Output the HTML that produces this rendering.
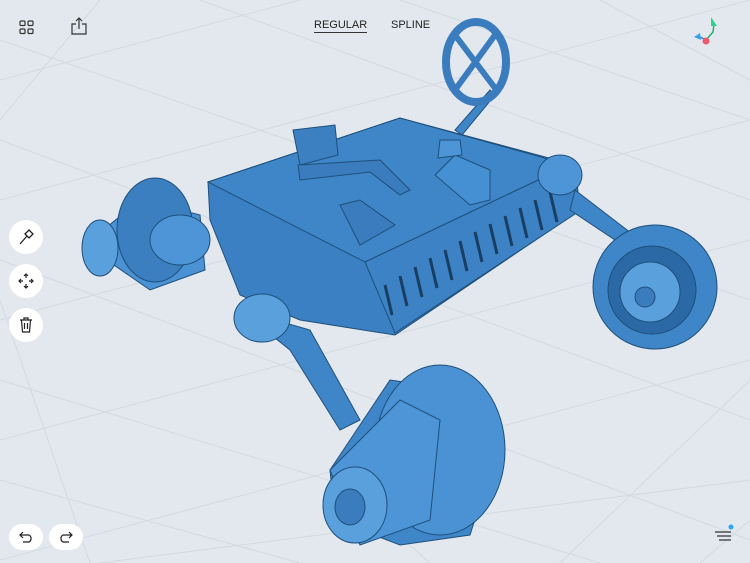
<!DOCTYPE html>
<html><head><style>
html,body{margin:0;padding:0;width:750px;height:563px;overflow:hidden;background:#e3e8ee;font-family:"Liberation Sans",sans-serif}
.btn{position:absolute;width:34px;height:34px;border-radius:50%;background:#fff;display:flex;align-items:center;justify-content:center}
.pill{position:absolute;width:34px;height:26px;border-radius:13px;background:#fff;display:flex;align-items:center;justify-content:center}
.t{position:absolute;font-size:11px;color:#222;top:19px}
</style></head><body>
<svg width="750" height="563" style="position:absolute;left:0;top:0">
<g stroke="#d2d9e0" stroke-width="1" fill="none">
<path d="M0 80 L750 -120 M0 200 L750 0 M0 320 L750 120 M0 440 L750 240 M0 560 L750 360 M100 563 L750 480 M0 40 L750 300 M0 140 L750 420 M0 260 L750 540 M0 380 L600 563 M0 480 L300 563 M200 0 L750 200 M400 0 L750 120"/>
<path d="M370 510 L430 563 M0 300 L90 563 M560 563 L750 380 M100 0 L0 120 M600 0 L750 80 M700 563 L750 520"/>
</g>
<g stroke="#1f4f7a" stroke-width="1">
<path d="M208 182 L400 118 L575 165 L580 210 L395 335 L300 320 L240 295 L210 220 Z" fill="#3a80c2"/>
<path d="M208 182 L400 118 L570 165 L365 262 Z" fill="#3f86c8"/>
<path d="M365 262 L570 165 L578 212 L395 333 Z" fill="#3c82c4"/>
<g stroke="#1a3e63" stroke-width="3">
<path d="M385 285 L392 315 M400 276 L407 306 M415 267 L422 297 M430 258 L437 288 M445 250 L452 280 M460 241 L467 271 M475 232 L482 262 M490 224 L497 254 M505 216 L512 246 M520 208 L527 238 M535 200 L542 230 M550 192 L557 222"/>
</g>
<path d="M293 130 L335 125 L338 155 L300 165 Z" fill="#3c80c2"/>
<path d="M340 205 L360 200 L395 225 L360 245 Z" fill="#3a7cbd"/>
<path d="M435 175 L455 155 L490 170 L490 200 L470 205 Z" fill="#4590d2"/>
<path d="M298 165 L380 160 L410 190 L400 195 L370 172 L300 180 Z" fill="#3a7cbd"/>
<path d="M85 245 L140 200 L200 215 L205 270 L150 290 Z" fill="#4a92d4"/>
<ellipse cx="155" cy="230" rx="38" ry="52" fill="#3b7fc0"/>
<ellipse cx="100" cy="248" rx="18" ry="28" fill="#5aa0dd"/>
<ellipse cx="180" cy="240" rx="30" ry="25" fill="#4d95d6"/>
<path d="M240 310 L310 330 L360 420 L340 430 L290 350 Z" fill="#3f86c9"/>
<ellipse cx="262" cy="318" rx="28" ry="24" fill="#5aa0dd"/>
<path d="M575 190 L640 240 L630 250 L570 210 Z" fill="#3f86c9"/>
<ellipse cx="560" cy="175" rx="22" ry="20" fill="#4d95d6"/>
<circle cx="655" cy="287" r="62" fill="#3f86c9"/>
<circle cx="652" cy="290" r="44" fill="#2a68a6"/>
<circle cx="650" cy="292" r="30" fill="#5aa0dd"/>
<circle cx="645" cy="297" r="10" fill="#3a7cbd"/>
<path d="M330 470 L390 380 L460 390 L500 440 L470 535 L400 545 L335 520 Z" fill="#3f86c9"/>
<ellipse cx="440" cy="450" rx="65" ry="85" fill="#4a92d4"/>
<path d="M330 470 L400 400 L440 420 L430 520 L360 545 Z" fill="#4d95d6"/>
<ellipse cx="355" cy="505" rx="32" ry="38" fill="#5aa0dd"/>
<ellipse cx="350" cy="507" rx="15" ry="18" fill="#3a7cbd"/>
<path d="M455 130 L490 90 L495 95 L462 135 Z" fill="#3f86c9"/>
<ellipse cx="476" cy="62" rx="30" ry="40" fill="none" stroke="#3a7cbd" stroke-width="8"/>
<path d="M455 35 L498 92 M495 35 L455 90" stroke="#3a7cbd" stroke-width="6"/>
<path d="M440 140 L460 140 L462 155 L438 158 Z" fill="#4d95d6"/>
</g>
<path d="M706 40 L713 32 L714 24" stroke="#2ab06a" stroke-width="1.5" fill="none"/>
<path d="M711 17 L717 26 L711 26 Z" fill="#2fd28a"/>
<path d="M706 40 L698 36" stroke="#2a7fd0" stroke-width="1.5"/>
<path d="M694 37 L700 33 L701 40 Z" fill="#3aa0e8"/>
<circle cx="706" cy="41" r="3.5" fill="#ef5a6a"/>
</svg>
<svg style="position:absolute;left:19px;top:20px" width="15" height="15"><g fill="none" stroke="#333" stroke-width="1.2"><rect x="1" y="1" width="5" height="4.5" rx="1"/><rect x="9" y="1" width="5" height="4.5" rx="1"/><rect x="1" y="9" width="5" height="4.5" rx="1"/><rect x="9" y="9" width="5" height="4.5" rx="1"/></g></svg>
<svg style="position:absolute;left:70px;top:17px" width="18" height="18"><g fill="none" stroke="#333" stroke-width="1.2"><path d="M6 7 H2 V17 H16 V7 H12"/><path d="M9 12 V1 M6 4 L9 1 L12 4"/></g></svg>
<div class="t" style="left:314px;border-bottom:1.5px solid #333;padding-bottom:1px">REGULAR</div>
<div class="t" style="left:391px">SPLINE</div>
<div class="btn" style="left:9px;top:220px"><svg width="18" height="18"><g fill="none" stroke="#222" stroke-width="1.3"><path d="M3 16 L10 8 M8 6 L12 2 L16 6 L12 10 Z"/></g></svg></div>
<div class="btn" style="left:9px;top:264px"><svg width="18" height="18"><g fill="none" stroke="#222" stroke-width="1.2"><path d="M9 2 V6 M9 12 V16 M2 9 H6 M12 9 H16 M7 4 L9 2 L11 4 M7 14 L9 16 L11 14 M4 7 L2 9 L4 11 M14 7 L16 9 L14 11"/></g></svg></div>
<div class="btn" style="left:9px;top:308px"><svg width="16" height="18"><g fill="none" stroke="#222" stroke-width="1.2"><path d="M2 4 H14 M6 4 V2 H10 V4 M3.5 4 L4.5 16 H11.5 L12.5 4 M6.5 7 V13 M9.5 7 V13"/></g></svg></div>
<div class="pill" style="left:9px;top:524px"><svg width="16" height="12"><path d="M5 1 L2 4 L5 7 M2 4 H11 A4 4 0 0 1 11 11 H5" fill="none" stroke="#222" stroke-width="1.2"/></svg></div>
<div class="pill" style="left:49px;top:524px"><svg width="16" height="12"><path d="M11 1 L14 4 L11 7 M14 4 H5 A4 4 0 0 0 5 11 H11" fill="none" stroke="#222" stroke-width="1.2"/></svg></div>
<svg style="position:absolute;left:713px;top:523px" width="22" height="20"><g stroke="#333" stroke-width="1.2"><path d="M2 9 H18 M4 13 H18 M6 17 H18"/></g><circle cx="18" cy="4" r="2.5" fill="#28a8f0"/></svg>
</body></html>
